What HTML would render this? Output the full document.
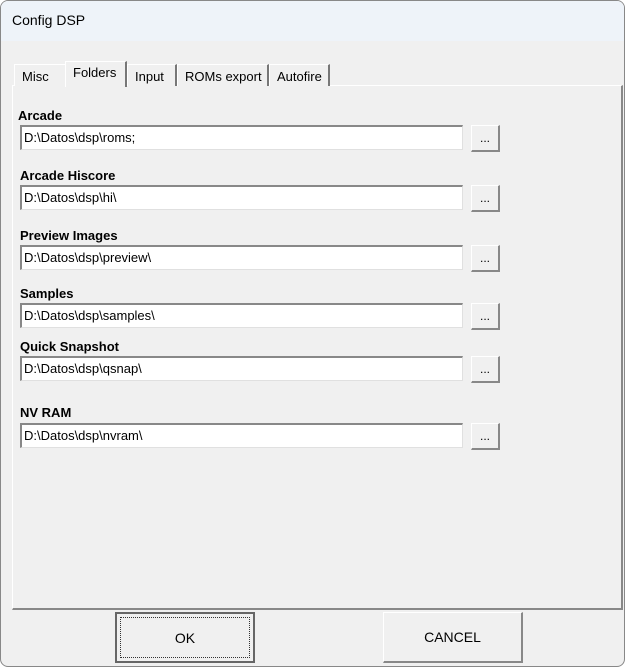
<!DOCTYPE html>
<html><head><style>
*{margin:0;padding:0;box-sizing:border-box}
body{width:625px;height:667px;overflow:hidden;background:#fff;font-family:"Liberation Sans",sans-serif;font-size:13px;color:#000}
.win{position:absolute;left:0;top:0;width:625px;height:667px;background:#f0f0f0;border:1px solid #888;border-radius:8px;overflow:hidden}
.title{position:absolute;left:0;top:0;width:100%;height:40px;background:#eef3f9}
.title span{position:absolute;left:11px;top:11px;font-size:14px}
.panel{position:absolute;left:11px;top:84px;width:611px;height:525px;border:1px solid #fff;border-right:2px solid #888;border-bottom:2px solid #888;background:#f0f0f0}
.tab{position:absolute;top:63px;height:22px;border-top:1px solid #fff;border-left:1px solid #fff;border-right:2px solid #777;font-size:13px;padding:4px 0 0 7px;background:#f0f0f0}
.tab.act{top:60px;height:26px;z-index:2;border-bottom:none;padding-top:3px}
.lbl{position:absolute;left:19px;font-weight:bold;font-size:13px}
.box{position:absolute;left:19px;width:443px;height:25px;background:#fff;border-top:2px solid #888;border-left:2px solid #888;border-right:1px solid #e0e0e0;border-bottom:1px solid #e0e0e0;font-size:13px;padding:3px 0 0 2px}
.dots{position:absolute;left:470px;width:29px;height:27px;border-top:1px solid #fff;border-left:1px solid #fff;border-right:2px solid #888;border-bottom:2px solid #888;text-align:center;font-size:12px;line-height:24px}
.btn{position:absolute;top:611px;width:140px;height:51px;border-top:1px solid #fff;border-left:1px solid #fff;border-right:2px solid #888;border-bottom:2px solid #888;text-align:center;line-height:48px;font-size:14px}
.ok{border:2px solid #666}
.ok i{position:absolute;left:3px;top:3px;right:3px;bottom:3px;border:1px dotted #333}
</style></head><body>
<div class="win">
<div class="title"><span>Config DSP</span></div>
<div class="panel"></div>
<div class="tab" style="left:13px;width:51px;border-right:none">Misc</div>
<div class="tab act" style="left:64px;width:62px">Folders</div>
<div class="tab" style="left:126px;width:50px">Input</div>
<div class="tab" style="left:176px;width:92px">ROMs export</div>
<div class="tab" style="left:268px;width:61px">Autofire</div>

<div class="lbl" style="top:107px;left:17px">Arcade</div>
<div class="box" style="top:124px">D:\Datos\dsp\roms;</div><div class="dots" style="top:124px">...</div>
<div class="lbl" style="top:167px">Arcade Hiscore</div>
<div class="box" style="top:184px">D:\Datos\dsp\hi\</div><div class="dots" style="top:184px">...</div>
<div class="lbl" style="top:227px">Preview Images</div>
<div class="box" style="top:244px">D:\Datos\dsp\preview\</div><div class="dots" style="top:244px">...</div>
<div class="lbl" style="top:285px">Samples</div>
<div class="box" style="top:302px">D:\Datos\dsp\samples\</div><div class="dots" style="top:302px">...</div>
<div class="lbl" style="top:338px">Quick Snapshot</div>
<div class="box" style="top:355px">D:\Datos\dsp\qsnap\</div><div class="dots" style="top:355px">...</div>
<div class="lbl" style="top:404px">NV RAM</div>
<div class="box" style="top:422px">D:\Datos\dsp\nvram\</div><div class="dots" style="top:422px">...</div>

<div class="btn ok" style="left:114px"><i></i>OK</div>
<div class="btn" style="left:382px">CANCEL</div>
</div>
</body></html>
